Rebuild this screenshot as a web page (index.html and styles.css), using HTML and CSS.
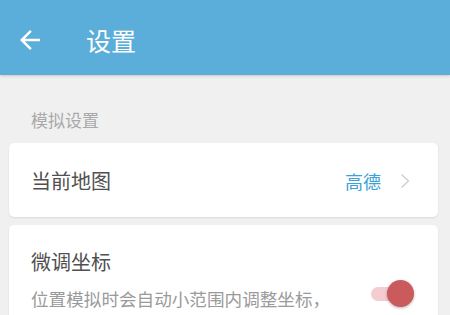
FILE: index.html
```html
<!DOCTYPE html>
<html lang="zh">
<head>
<meta charset="utf-8">
<link rel="stylesheet" href="styles.css">
</head>
<body>
<header class="appbar">
  <svg class="back" viewBox="0 0 24 24" width="30" height="30"><path d="M20 11H7.83l5.59-5.59L12 4l-8 8 8 8 1.41-1.41L7.83 13H20v-2z" fill="#fff"/></svg>
  <h1 class="title">设置</h1>
</header>
<main class="content">
  <div class="section-label">模拟设置</div>
  <div class="card row">
    <span class="row-title">当前地图</span>
    <span class="row-value">高德</span>
    <svg class="chev" viewBox="0 0 10 16" width="10" height="16"><path d="M1.5 1.5L8.5 8L1.5 14.5" fill="none" stroke="#cfcfcf" stroke-width="1.4"/></svg>
  </div>
  <div class="card toggle-card">
    <div class="toggle-text">
      <div class="row-title">微调坐标</div>
      <div class="desc">位置模拟时会自动小范围内调整坐标，防止位置长时间不变被检测</div>
    </div>
    <div class="switch"><span class="track"></span><span class="thumb"></span></div>
  </div>
</main>
</body>
</html>
```
FILE: styles.css
```css
html, body {
  margin: 0;
  padding: 0;
}
body {
  background: #f0f0f0;
  font-family: "Noto Sans CJK SC", "Noto Sans", sans-serif;
  overflow: hidden;
}
.appbar {
  height: 75px;
  background: #5aaed9;
  display: flex;
  align-items: center;
  padding-top: 4px;
  box-sizing: border-box;
  box-shadow: 0 1px 3px rgba(0,0,0,0.18);
  position: relative;
}
.back {
  margin-left: 15px;
  flex: none;
}
.title {
  margin: 0 0 0 41px;
  font-size: 25px;
  font-weight: normal;
  color: #fff;
  line-height: 30px;
}
.content {
  padding: 0 12px 0 9px;
}
.section-label {
  padding: 35px 0 0 22px;
  font-size: 17px;
  line-height: 20px;
  color: #a9a9a9;
}
.card {
  background: #fff;
  border-radius: 5px;
  box-shadow: 0 1px 2px rgba(0,0,0,0.10);
}
.row {
  margin-top: 13px;
  height: 74px;
  display: flex;
  align-items: center;
  padding: 2px 28px 0 22px;
  box-sizing: border-box;
}
.row-title {
  font-size: 20px;
  line-height: 28px;
  color: #505050;
}
.row .row-title {
  flex: 1;
}
.row-value {
  font-size: 18px;
  color: #3aa2d8;
  margin-right: 19px;
}
.chev {
  flex: none;
}
.toggle-card {
  margin-top: 8px;
  display: flex;
  padding: 23px 24px 20px 22px;
}
.toggle-text {
  flex: 1;
  width: 310px;
}
.desc {
  margin-top: 10px;
  font-size: 17.6px;
  line-height: 26px;
  color: #9a9a9a;
  width: 310px;
}
.switch {
  position: relative;
  width: 44px;
  height: 28px;
  margin-top: 32px;
  margin-left: 30px;
  flex: none;
}
.track {
  position: absolute;
  left: 0;
  top: 7px;
  width: 36px;
  height: 14px;
  border-radius: 7px;
  background: #f3cdd0;
}
.thumb {
  position: absolute;
  left: 16px;
  top: 0;
  width: 27px;
  height: 27px;
  border-radius: 50%;
  background: #cb5a5c;
  box-shadow: 0 1px 3px rgba(0,0,0,0.3);
}
```
